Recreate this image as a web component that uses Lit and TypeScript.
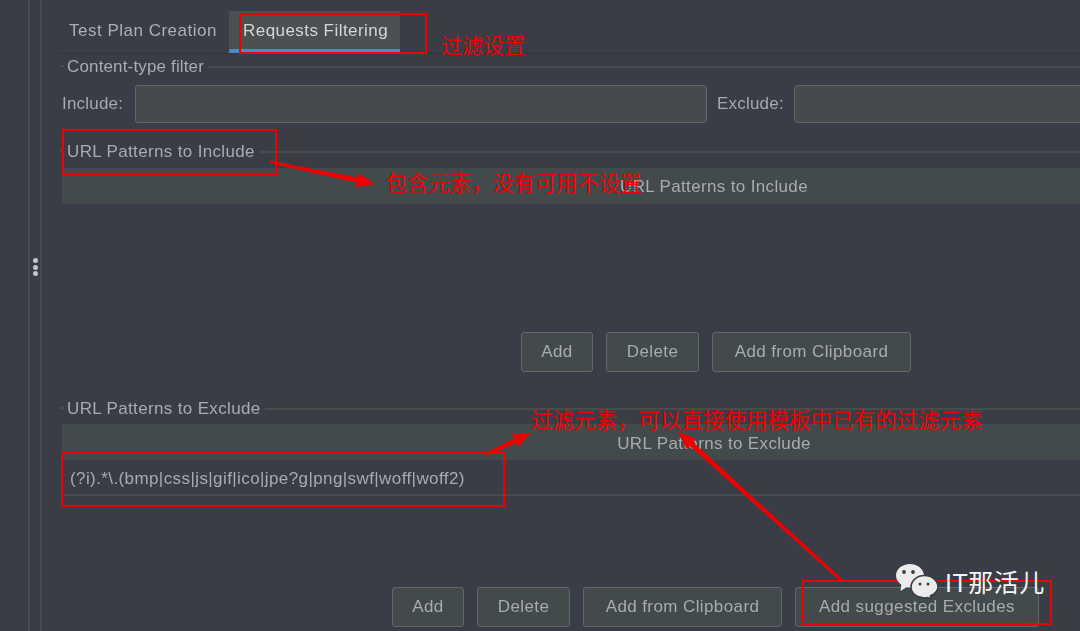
import { LitElement, css, html, svg } from 'lit'
import { customElement } from 'lit/decorators.js'

// tapered annotation arrow: thin tail, wide head
function arrow(x1: number, y1: number, x2: number, y2: number, head = 18, wing = 7, neck = 2.6) {
  const len = Math.hypot(x2 - x1, y2 - y1)
  const ux = (x2 - x1) / len
  const uy = (y2 - y1) / len
  const nx = -uy
  const ny = ux
  const bx = x2 - ux * head
  const by = y2 - uy * head
  const pts = [
    [x1 + nx * 1.4, y1 + ny * 1.4],
    [bx + nx * neck, by + ny * neck],
    [bx + nx * wing, by + ny * wing],
    [x2, y2],
    [bx - nx * wing, by - ny * wing],
    [bx - nx * neck, by - ny * neck],
    [x1 - nx * 1.4, y1 - ny * 1.4],
  ]
  return svg`<polygon points=${pts.map((p) => p.join(',')).join(' ')} fill="#f00000"></polygon>`
}

@customElement('app-root')
export class AppRoot extends LitElement {
  render() {
    return html`
      <div class="ui">
        <div class="rail">
          <div class="grip"><i></i><i></i><i></i></div>
        </div>
        <div class="main">
          <div class="tabs">
            <div class="tab">Test Plan Creation</div>
            <div class="tab active">Requests Filtering</div>
          </div>

          ${this.title_('Content-type filter', 'first')}
          <div class="filter">
            <label class="inc">Include:</label>
            <div class="input"></div>
            <label class="exc">Exclude:</label>
            <div class="input"></div>
          </div>

          ${this.title_('URL Patterns to Include', 'second')}
          <div class="thead">URL Patterns to Include</div>
          <div class="buttons include">
            <button class="b-add">Add</button>
            <button class="b-del">Delete</button>
            <button class="b-clip">Add from Clipboard</button>
          </div>

          ${this.title_('URL Patterns to Exclude', 'third')}
          <div class="thead tight">URL Patterns to Exclude</div>
          <div class="row">(?i).*\\.(bmp|css|js|gif|ico|jpe?g|png|swf|woff|woff2)</div>
          <div class="buttons exclude">
            <button class="b-add">Add</button>
            <button class="b-del">Delete</button>
            <button class="b-clip">Add from Clipboard</button>
            <button class="b-sug">Add suggested Excludes</button>
          </div>
        </div>
      </div>

      <svg class="marks" width="1080" height="631" viewBox="0 0 1080 631">
        <g fill="none" stroke="#f00000" stroke-width="2">
          <rect x="240" y="14" width="186" height="39"></rect>
          <rect x="63" y="130" width="213" height="44"></rect>
          <rect x="62" y="453" width="442" height="53"></rect>
          <rect x="803" y="581" width="248" height="43"></rect>
        </g>
        ${arrow(270, 162, 375, 184)}
        ${arrow(485, 455, 531, 433)}
        ${arrow(842, 581, 678, 432)}
      </svg>

      <div class="note n1">过滤设置</div>
      <div class="note n2">包含元素，没有可用不设置</div>
      <div class="note n3">过滤元素，可以直接使用模板中已有的过滤元素</div>

      <div class="mark">
        <svg width="42" height="35" viewBox="0 0 42 35">
          <path fill="#ececec" d="M14 0C6.300 0 0 5 0 11.500c0 3.800 2.100 7 5.300 9.200L4.500 27l6.300-3.900c1 .2 2.100.3 3.200.3 7.700 0 14-5.100 14-11.600S21.700 0 14 0z"></path>
          <path fill="#ececec" stroke="#3a3d46" stroke-width="1.600" d="M28.500 11.500C21.200 11.500 15 16.500 15 23s6.200 11 13.500 11c1.200 0 2.200-.1 3.300-.4L35 35l-.6-3.200C38.700 29.900 42 26.800 42 23c0-6.500-6.200-11.500-13.500-11.500z"></path>
          <circle cx="8" cy="8" r="1.900" fill="#3a3d46"></circle>
          <circle cx="17" cy="8" r="1.900" fill="#3a3d46"></circle>
          <circle cx="24" cy="20" r="1.500" fill="#3a3d46"></circle>
          <circle cx="32" cy="20" r="1.500" fill="#3a3d46"></circle>
        </svg>
        <span>IT那活儿</span>
      </div>
    `
  }

  private title_(text: string, cls: string) {
    return html`<div class="title ${cls}"><em></em><span>${text}</span><b></b></div>`
  }

  static styles = css`
    :host {
      display: block;
      position: relative;
      width: 1080px;
      height: 631px;
      overflow: hidden;
      background: #3a3d46;
      font-family: 'Liberation Sans', Arial, sans-serif;
    }

    .ui {
      display: flex;
      width: 1366px;
      height: 631px;
      filter: blur(0.55px);
      color: #b2b4b6;
      font-size: 17px;
      letter-spacing: 0.35px;
    }

    .rail {
      flex: none;
      width: 57px;
      position: relative;
    }

    .rail::before,
    .rail::after {
      content: '';
      position: absolute;
      top: 0;
      bottom: 0;
      width: 2px;
      background: #484c4c;
    }

    .rail::before {
      left: 28px;
    }

    .rail::after {
      left: 40px;
    }

    .grip {
      position: absolute;
      left: 33px;
      top: 258px;
      display: flex;
      flex-direction: column;
      gap: 1.7px;
    }

    .grip i {
      display: block;
      width: 5px;
      height: 5px;
      border-radius: 50%;
      background: #c3c5c8;
    }

    .main {
      flex: 1;
      min-width: 0;
      display: flex;
      flex-direction: column;
    }

    .tabs {
      display: flex;
      height: 42px;
      margin-top: 11px;
      border-bottom: 1px solid #33353c;
    }

    .tab {
      display: flex;
      align-items: center;
      box-sizing: border-box;
      padding: 0 12px;
      width: 172px;
      height: 40px;
      letter-spacing: 0.5px;
      white-space: nowrap;
      color: #adafb1;
    }

    .tab.active {
      width: 171px;
      padding: 2px 0 0 14px;
      height: 42px;
      background: #4b5052;
      border-bottom: 4px solid #4a88c8;
      letter-spacing: 0.45px;
      color: #d4d6d8;
    }

    .title {
      display: flex;
      align-items: center;
      height: 20px;
      padding-left: 3px;
      color: #a9abad;
    }

    .title span {
      padding-top: 1px;
    }

    .title em {
      width: 4px;
      height: 2px;
      background: #484c4c;
      margin-right: 3px;
    }

    .title b {
      flex: 1;
      height: 2px;
      margin-left: 4px;
      margin-top: 2px;
      background: #484c4c;
    }

    .title.first {
      margin-top: 2px;
      letter-spacing: 0.15px;
    }

    .title.second {
      margin-top: 18px;
    }

    .title.third {
      margin-top: 26px;
    }

    .filter {
      display: flex;
      align-items: center;
      height: 38px;
      margin-top: 9px;
      padding-left: 5px;
      letter-spacing: 0.2px;
      color: #a6a8aa;
    }

    .inc {
      width: 73px;
    }

    .exc {
      width: 77px;
      padding-left: 10px;
    }

    .input {
      flex: 1;
      height: 38px;
      box-sizing: border-box;
      border: 1px solid #63676a;
      border-radius: 3px;
      background: #454b4c;
    }

    .thead {
      display: flex;
      align-items: center;
      justify-content: center;
      box-sizing: border-box;
      height: 36px;
      margin: 7px 0 0 5px;
      padding-top: 1px;
      background: #434a4b;
      color: #a9abad;
    }

    .thead.tight {
      margin-top: 6px;
      padding-top: 4px;
    }

    .row {
      display: flex;
      align-items: center;
      box-sizing: content-box;
      height: 30px;
      padding: 4px 0 0 8px;
      margin-left: 5px;
      border-bottom: 2px solid #474b4d;
      letter-spacing: 0.4px;
      color: #a9abad;
    }

    .buttons {
      display: flex;
    }

    .buttons.include {
      margin: 128px 0 0 464px;
      gap: 13px;
    }

    .buttons.exclude {
      margin: 91px 0 0 335px;
      gap: 13px;
    }

    button {
      height: 40px;
      box-sizing: border-box;
      padding: 0;
      border: 1px solid #63676a;
      border-radius: 3px;
      background: #434a4b;
      color: #a9abad;
      font: inherit;
      letter-spacing: 0.4px;
    }

    .b-add {
      width: 72px;
    }

    .b-del {
      width: 93px;
    }

    .b-clip {
      width: 199px;
    }

    .b-sug {
      width: 244px;
    }

    .marks {
      position: absolute;
      inset: 0;
    }

    .note {
      position: absolute;
      color: #f00000;
      font-family: 'Noto Sans CJK SC', sans-serif;
      white-space: nowrap;
      line-height: 24px;
    }

    .n1 {
      left: 441px;
      top: 32px;
      font-size: 21px;
    }

    .n2 {
      left: 386px;
      top: 170px;
      font-size: 21.3px;
    }

    .n3 {
      left: 531px;
      top: 407px;
      font-size: 21.5px;
    }

    .mark {
      position: absolute;
      left: 896px;
      top: 564px;
      display: flex;
      align-items: flex-start;
      gap: 7px;
      color: #f4f4f4;
      font-family: 'Liberation Sans', 'Noto Sans CJK SC', sans-serif;
      font-size: 25px;
      line-height: 38px;
      letter-spacing: 0.5px;
      white-space: nowrap;
    }
  `
}

declare global {
  interface HTMLElementTagNameMap {
    'app-root': AppRoot
  }
}
